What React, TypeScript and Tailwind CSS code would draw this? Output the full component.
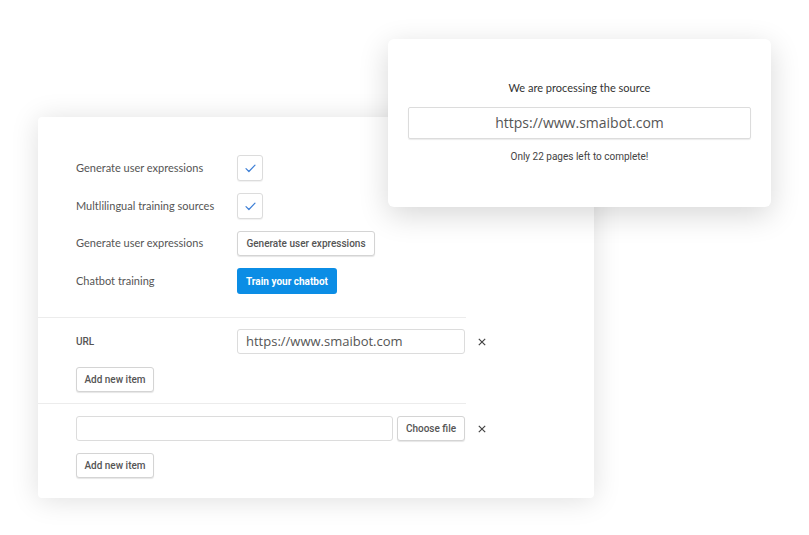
import React from "react";

const labelFont = { fontFamily: "Lato, 'Open Sans', sans-serif" } as React.CSSProperties;

function Check() {
  return (
    <div className="flex h-[26px] w-[26px] shrink-0 items-center justify-center rounded-[3px] border border-[#dcdcdc] bg-white shadow-[0_1px_1px_rgba(0,0,0,0.06)]">
      <svg width="11" height="9" viewBox="0 0 11 9" fill="none">
        <path d="M1 4.6 L3.9 7.5 L10 1.2" stroke="#3d7fd6" strokeWidth="1.2" strokeLinecap="round" strokeLinejoin="round" />
      </svg>
    </div>
  );
}

function XIcon() {
  return (
    <svg width="8" height="8" viewBox="0 0 8 8" className="ml-[13px] shrink-0">
      <path d="M0.8 0.8 L7.2 7.2 M7.2 0.8 L0.8 7.2" stroke="#444" strokeWidth="1.2" />
    </svg>
  );
}

function SmallButton({ children, className = "" }: { children: React.ReactNode; className?: string }) {
  return (
    <button className={"flex h-[25px] shrink-0 items-center justify-center rounded-[3px] border border-[#d4d4d4] bg-white text-[10px] font-medium text-[#555] shadow-[0_1px_1px_rgba(0,0,0,0.1)] font-['Roboto',sans-serif] " + className}>
      {children}
    </button>
  );
}

function Row({ label, children }: { label: string; children: React.ReactNode }) {
  return (
    <div className="flex items-center">
      <div className="w-[161px] shrink-0 text-[11px] text-[#555]" style={labelFont}>{label}</div>
      {children}
    </div>
  );
}

function Divider() {
  return <div className="h-px w-[428px] bg-[#ececec]" />;
}

export default function App() {
  return (
    <div className="relative h-[535px] w-[809px] overflow-hidden bg-white">
      <div className="ml-[38px] mt-[117px] h-[381px] w-[556px] rounded-[4px] bg-white shadow-[0_2px_28px_rgba(0,0,0,0.13)]">
        <div className="flex flex-col gap-[12px] pl-[38px] pt-[38px] pb-[23px]">
          <Row label="Generate user expressions"><Check /></Row>
          <Row label="Multlilingual training sources"><Check /></Row>
          <Row label="Generate user expressions">
            <SmallButton className="w-[138px]">Generate user expressions</SmallButton>
          </Row>
          <Row label="Chatbot training">
            <button className="flex h-[26px] w-[100px] items-center justify-center rounded-[3px] bg-[#0b8de5] text-[10px] font-bold text-white font-['Roboto',sans-serif]">
              Train your chatbot
            </button>
          </Row>
        </div>
        <Divider />
        <div className="pl-[38px] pt-[11px] pb-[11px]">
          <div className="flex items-center">
            <div className="w-[161px] shrink-0 text-[10px] font-medium text-[#555] font-['Roboto',sans-serif]">URL</div>
            <div className="flex h-[25px] w-[228px] shrink-0 items-center rounded-[3px] border border-[#dcdcdc] pl-[8px] text-[13px] text-[#555] font-['Open_Sans',sans-serif]">
              https://www.smaibot.com
            </div>
            <XIcon />
          </div>
          <SmallButton className="mt-[13px] w-[78px]">Add new item</SmallButton>
        </div>
        <Divider />
        <div className="pl-[38px] pt-[12px]">
          <div className="flex items-center">
            <div className="h-[25px] w-[317px] shrink-0 rounded-[3px] border border-[#dcdcdc]" />
            <SmallButton className="ml-[4px] w-[68px]">Choose file</SmallButton>
            <XIcon />
          </div>
          <SmallButton className="mt-[12px] w-[78px]">Add new item</SmallButton>
        </div>
      </div>

      <div className="absolute left-[388px] top-[39px] flex h-[168px] w-[383px] flex-col items-center rounded-[6px] bg-white pt-[41px] shadow-[0_8px_30px_rgba(0,0,0,0.16)]">
        <div className="text-[11px] text-[#333]" style={labelFont}>We are processing the source</div>
        <div className="mt-[10px] flex h-[32px] w-[343px] items-center justify-center rounded-[2px] border border-[#dcdcdc] text-[14px] text-[#555] shadow-[0_1px_1px_rgba(0,0,0,0.08)] font-['Open_Sans',sans-serif]">
          https://www.smaibot.com
        </div>
        <div className="mt-[10px] text-[10px] text-[#444] font-['Roboto',sans-serif]">Only 22 pages left to complete!</div>
      </div>
    </div>
  );
}
